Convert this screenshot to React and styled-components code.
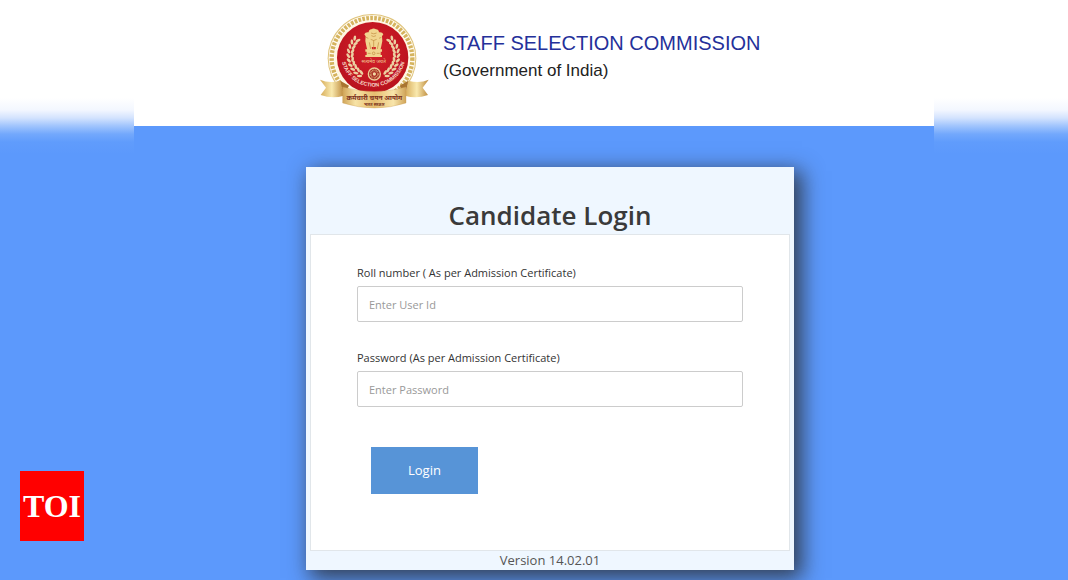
import React, { useState } from 'react';
import styled, { createGlobalStyle } from 'styled-components';

const GlobalStyle = createGlobalStyle`
  * {
    box-sizing: border-box;
  }

  body {
    margin: 0;
    background: #5c99fc;
    font-family: 'Open Sans', 'Noto Sans', sans-serif;
    color: #333;
  }
`;

const Page = styled.div`
  min-height: 100vh;
  overflow: hidden;
  background: linear-gradient(
    to bottom,
    #fff 98px,
    #f3f7ff 110px,
    #d3e3fe 118px,
    #a0c4fd 126px,
    #73a8fc 134px,
    #609cfc 142px,
    #5c99fc 154px
  );
`;

const Stage = styled.div`
  max-width: 800px;
  min-height: 100vh;
  margin: 0 auto;
  display: flex;
  flex-direction: column;
  background: #5c99fc;
`;

const Header = styled.header`
  display: flex;
  align-items: flex-start;
  gap: 3px;
  padding: 5px 0 11px 176px;
  background: #fff;
`;

const Emblem = styled.svg`
  flex: none;
  width: 130px;
  height: 110px;
`;

const Heading = styled.div`
  padding-top: 24px;
  font-family: 'Liberation Sans', Arial, sans-serif;
  white-space: nowrap;
`;

const OrgName = styled.h1`
  margin: 0;
  font-size: 20px;
  line-height: 28px;
  font-weight: 400;
  color: #24309a;
`;

const OrgNote = styled.p`
  margin: 0;
  font-size: 17px;
  line-height: 28px;
  color: #222;
`;

const Main = styled.main`
  padding: 41px 0 10px 32px;
`;

const Card = styled.section`
  max-width: 488px;
  margin: 0 auto;
  padding: 29px 4px 0;
  background: #eff7ff;
  box-shadow: 6px 6px 20px 2px rgba(40, 40, 40, 0.8);
`;

const CardTitle = styled.h2`
  margin: 0;
  font-size: 26px;
  line-height: 38px;
  font-weight: 600;
  text-align: center;
  color: #3a3a3a;
`;

const LoginForm = styled.form`
  padding: 28px 46px 56px;
  border: 1px solid #e1e6ea;
  background: #fff;
`;

const Field = styled.div`
  margin-bottom: 26px;
`;

const Label = styled.label`
  display: block;
  margin-bottom: 3px;
  font-size: 11px;
  line-height: 20px;
  color: #333;
`;

const Input = styled.input`
  display: block;
  width: 100%;
  height: 36px;
  padding: 0 11px;
  border: 1px solid #ccc;
  border-radius: 2px;
  background: #fff;
  font-family: inherit;
  font-size: 11px;
  color: #333;

  &::placeholder {
    color: #999;
    opacity: 1;
  }
`;

const LoginButton = styled.button`
  display: block;
  margin: 40px 0 0 14px;
  padding: 13px 37px;
  border: 0;
  background: #5794d7;
  color: #fff;
  font-family: inherit;
  font-size: 13px;
  line-height: 21px;
  cursor: pointer;
`;

const Version = styled.p`
  margin: 0;
  font-size: 13px;
  line-height: 19px;
  text-align: center;
  color: #555;
`;

const Badge = styled.a`
  position: fixed;
  left: 20px;
  bottom: 39px;
  display: flex;
  align-items: center;
  justify-content: center;
  width: 64px;
  height: 70px;
  background: #f00;
  color: #fff;
  font-family: 'Liberation Serif', 'Times New Roman', serif;
  font-size: 32px;
  font-weight: 700;
  text-decoration: none;
`;

// one side of the wreath: angles in degrees, measured clockwise from the bottom
const LEAF_ANGLES = [28, 39, 50, 61, 72, 83, 94, 105, 116, 127];

function Wreath() {
  return LEAF_ANGLES.map((angle) => (
    <g key={angle} transform={`rotate(${angle} 190 150)`}>
      <ellipse cx="183" cy="213" rx="8" ry="4" transform="rotate(28 183 213)" />
      <ellipse cx="183" cy="225" rx="8" ry="4" transform="rotate(-28 183 225)" />
    </g>
  ));
}

function SscEmblem() {
  return (
    <Emblem viewBox="0 0 390 330" role="img" aria-label="Staff Selection Commission emblem">
      <defs>
        <linearGradient id="ribbon" x1="0" x2="1">
          <stop offset="0" stopColor="#d0a458" />
          <stop offset="0.2" stopColor="#f7e3a6" />
          <stop offset="0.5" stopColor="#e6bd70" />
          <stop offset="0.8" stopColor="#f8e5ab" />
          <stop offset="1" stopColor="#d0a458" />
        </linearGradient>
        <linearGradient id="tail" x1="0" x2="1">
          <stop offset="0" stopColor="#d6ab58" />
          <stop offset="0.5" stopColor="#f9e9ae" />
          <stop offset="1" stopColor="#bd8a3d" />
        </linearGradient>
        <radialGradient id="disc" cx="0.5" cy="0.4" r="0.6">
          <stop offset="0" stopColor="#d5202a" />
          <stop offset="1" stopColor="#b8121e" />
        </radialGradient>
        <path id="motto" d="M 93 148 A 97 97 0 0 0 287 148" />
      </defs>

      <circle cx="186" cy="160" r="133" fill="#dfc37a" />
      <circle cx="186" cy="160" r="130" fill="#fffaf0" />
      <circle
        cx="186"
        cy="160"
        r="121"
        fill="none"
        stroke="#d5b45f"
        strokeWidth="13"
        strokeDasharray="8 4"
      />
      <circle cx="186" cy="160" r="113" fill="#fff7df" />
      <circle cx="188" cy="158" r="107" fill="url(#disc)" />

      <g fill="#ecd0a2">
        <Wreath />
        <g transform="translate(380 0) scale(-1 1)">
          <Wreath />
        </g>
      </g>

      {/* lion capital */}
      <g fill="#f1d58f">
        <path d="M176 82 q0 -8 8 -9 q7 -5 14 0 q9 1 9 10 l2 20 q-2 15 -7 23 h-22 q-6 -10 -6 -24 z" />
        <path d="M177 82 q-11 -2 -14 6 l4 6 q-3 14 2 29 l3 12 h14 l-3 -42 z" />
        <path d="M206 82 q11 -2 14 6 l-4 6 q3 14 -2 29 l-3 12 h-14 l3 -42 z" />
        <path d="M166 133 h50 v7 h-4 v10 h4 v6 h-50 v-6 h4 v-10 h-4 z" />
      </g>
      <g fill="none" stroke="#c08a3c" strokeWidth="2">
        <path d="M183 84 q8 5 17 0 M184 92 q7 5 14 0 M182 103 q9 7 18 0 M178 112 l4 20 M206 112 l-4 20 M191 106 v27 M168 97 l7 3 M214 97 l-7 3" />
        <circle cx="191" cy="145" r="4" />
        <path d="M173 145 h9 M200 145 h9" />
      </g>
      <text x="191" y="175" textAnchor="middle" fontSize="15" fill="#f0cf9a" fontFamily="'Noto Sans Devanagari', 'Noto Sans', sans-serif">
        सत्यमेव जयते
      </text>

      {/* wheel */}
      <circle cx="193" cy="207" r="18" fill="#a5231f" stroke="#edce98" strokeWidth="4" />
      <circle cx="193" cy="207" r="11" fill="none" stroke="#ddb574" strokeWidth="6" strokeDasharray="2 2" />
      <circle cx="193" cy="207" r="5" fill="#f2d7a2" />

      <text fontSize="16" fontWeight="700" fill="#f8dccb" fontFamily="'Liberation Sans', Arial, sans-serif">
        <textPath href="#motto" startOffset="50%" textAnchor="middle">
          STAFF SELECTION COMMISSION
        </textPath>
      </text>

      {/* ribbon */}
      <path d="M30 224 q28 13 61 3 l10 45 q-34 10 -69 -2 l16 -22 z" fill="url(#tail)" />
      <path d="M356 224 q-28 13 -61 3 l-10 45 q34 10 69 -2 l-16 -22 z" fill="url(#tail)" />
      <path d="M91 227 l26 15 l-16 30 z M295 227 l-26 15 l16 30 z" fill="#a97530" />
      <path d="M98 246 q94 27 190 0 v48 q-94 30 -190 0 z" fill="url(#ribbon)" stroke="#c79a52" />
      <g textAnchor="middle" fill="#79301b" fontWeight="700" fontFamily="'Noto Sans Devanagari', 'Noto Sans', sans-serif">
        <text x="193" y="284" fontSize="20">कर्मचारी चयन आयोग</text>
        <text x="193" y="302" fontSize="12">भारत सरकार</text>
      </g>
    </Emblem>
  );
}

export default function App() {
  const [userId, setUserId] = useState('');
  const [password, setPassword] = useState('');

  function handleSubmit(event) {
    event.preventDefault();
  }

  return (
    <Page>
      <GlobalStyle />
      <Stage>
        <Header>
          <SscEmblem />
          <Heading>
            <OrgName>STAFF SELECTION COMMISSION</OrgName>
            <OrgNote>(Government of India)</OrgNote>
          </Heading>
        </Header>

        <Main>
          <Card>
            <CardTitle>Candidate Login</CardTitle>
            <LoginForm onSubmit={handleSubmit}>
              <Field>
                <Label htmlFor="userId">Roll number ( As per Admission Certificate)</Label>
                <Input
                  id="userId"
                  type="text"
                  placeholder="Enter User Id"
                  value={userId}
                  onChange={(event) => setUserId(event.target.value)}
                />
              </Field>
              <Field>
                <Label htmlFor="password">Password (As per Admission Certificate)</Label>
                <Input
                  id="password"
                  type="password"
                  placeholder="Enter Password"
                  value={password}
                  onChange={(event) => setPassword(event.target.value)}
                />
              </Field>
              <LoginButton type="submit">Login</LoginButton>
            </LoginForm>
            <Version>Version 14.02.01</Version>
          </Card>
        </Main>
      </Stage>
      <Badge href="#toi">TOI</Badge>
    </Page>
  );
}
